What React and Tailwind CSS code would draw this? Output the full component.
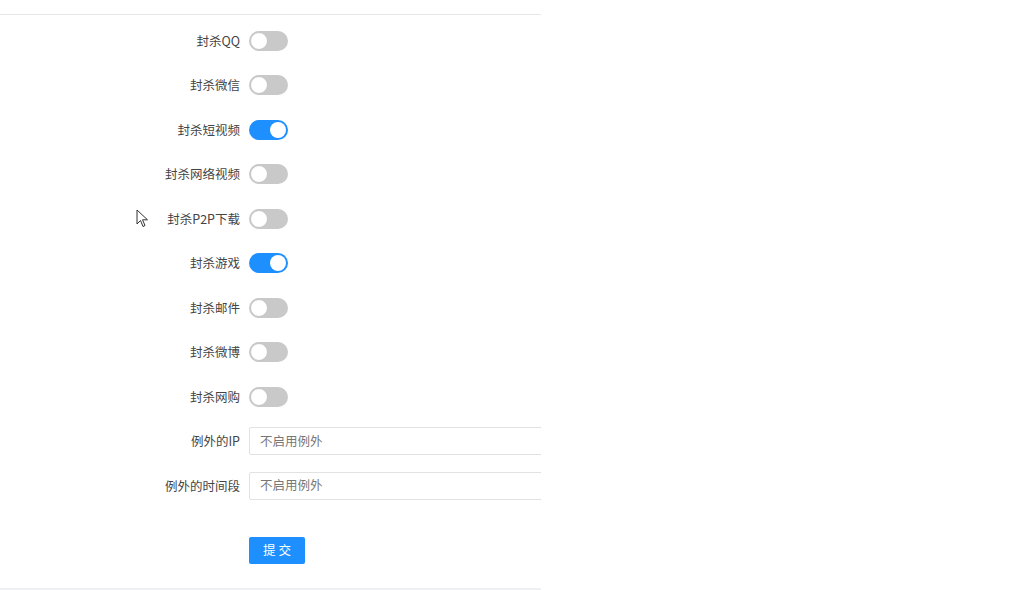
import React from "react";

const rows = [
  { label: "封杀QQ", on: false },
  { label: "封杀微信", on: false },
  { label: "封杀短视频", on: true },
  { label: "封杀网络视频", on: false },
  { label: "封杀P2P下载", on: false },
  { label: "封杀游戏", on: true },
  { label: "封杀邮件", on: false },
  { label: "封杀微博", on: false },
  { label: "封杀网购", on: false },
];

function Switch({ on }) {
  return (
    <div
      className={
        on
          ? "w-[39px] h-[20px] rounded-full bg-[#1e8fff] flex items-center justify-end px-[2px]"
          : "w-[39px] h-[20px] rounded-full bg-[#c9c9c9] flex items-center justify-start px-[1px]"
      }
    >
      <div
        className={
          on
            ? "w-[16px] h-[16px] rounded-full bg-white"
            : "w-[18px] h-[18px] rounded-full bg-white border border-[#c4c4c4]"
        }
      />
    </div>
  );
}

export default function App() {
  return (
    <div
      className="w-[1024px] h-[590px] bg-white relative overflow-hidden"
      style={{ fontFamily: '"Noto Sans CJK SC", "Noto Sans", sans-serif' }}
    >
      <div className="w-[541px] h-full overflow-hidden flex flex-col">
        <div className="h-[14px] shrink-0" />
        <div className="border-t border-[#e8e8e8] pt-[3.5px] flex flex-col">
          {rows.map((r) => (
            <div key={r.label} className="h-[44.5px] flex items-center">
              <div className="w-[240px] text-right text-[12.5px] text-[#444] leading-none">
                {r.label}
              </div>
              <div className="ml-[9px]">
                <Switch on={r.on} />
              </div>
            </div>
          ))}
          {["例外的IP", "例外的时间段"].map((l) => (
            <div key={l} className="h-[44.5px] flex items-center">
              <div className="w-[240px] shrink-0 text-right text-[12.5px] text-[#444] leading-none">
                {l}
              </div>
              <div className="ml-[9px] w-[340px] shrink-0 h-[28px] border border-[#e2e2e2] rounded-[2px] flex items-center pl-[10px] text-[12.5px] text-[#777]">
                不启用例外
              </div>
            </div>
          ))}
          <div className="flex mt-[28.5px] ml-[249px]">
            <button className="w-[56px] h-[27px] rounded-[2px] bg-[#1e8fff] text-white text-[12.5px] flex items-center justify-center">
              提 交
            </button>
          </div>
        </div>
        <div className="mt-auto h-[2px] bg-[#eef0f3]" />
      </div>
      <svg
        className="absolute left-[136px] top-[209px]"
        width="14"
        height="20"
        viewBox="0 0 14 20"
      >
        <path
          d="M1 1 L1 15 L4.5 11.5 L7 17.5 L9 16.5 L6.5 10.8 L11.5 10.8 Z"
          fill="white"
          stroke="#333"
          strokeWidth="1"
          strokeLinejoin="round"
        />
      </svg>
    </div>
  );
}
